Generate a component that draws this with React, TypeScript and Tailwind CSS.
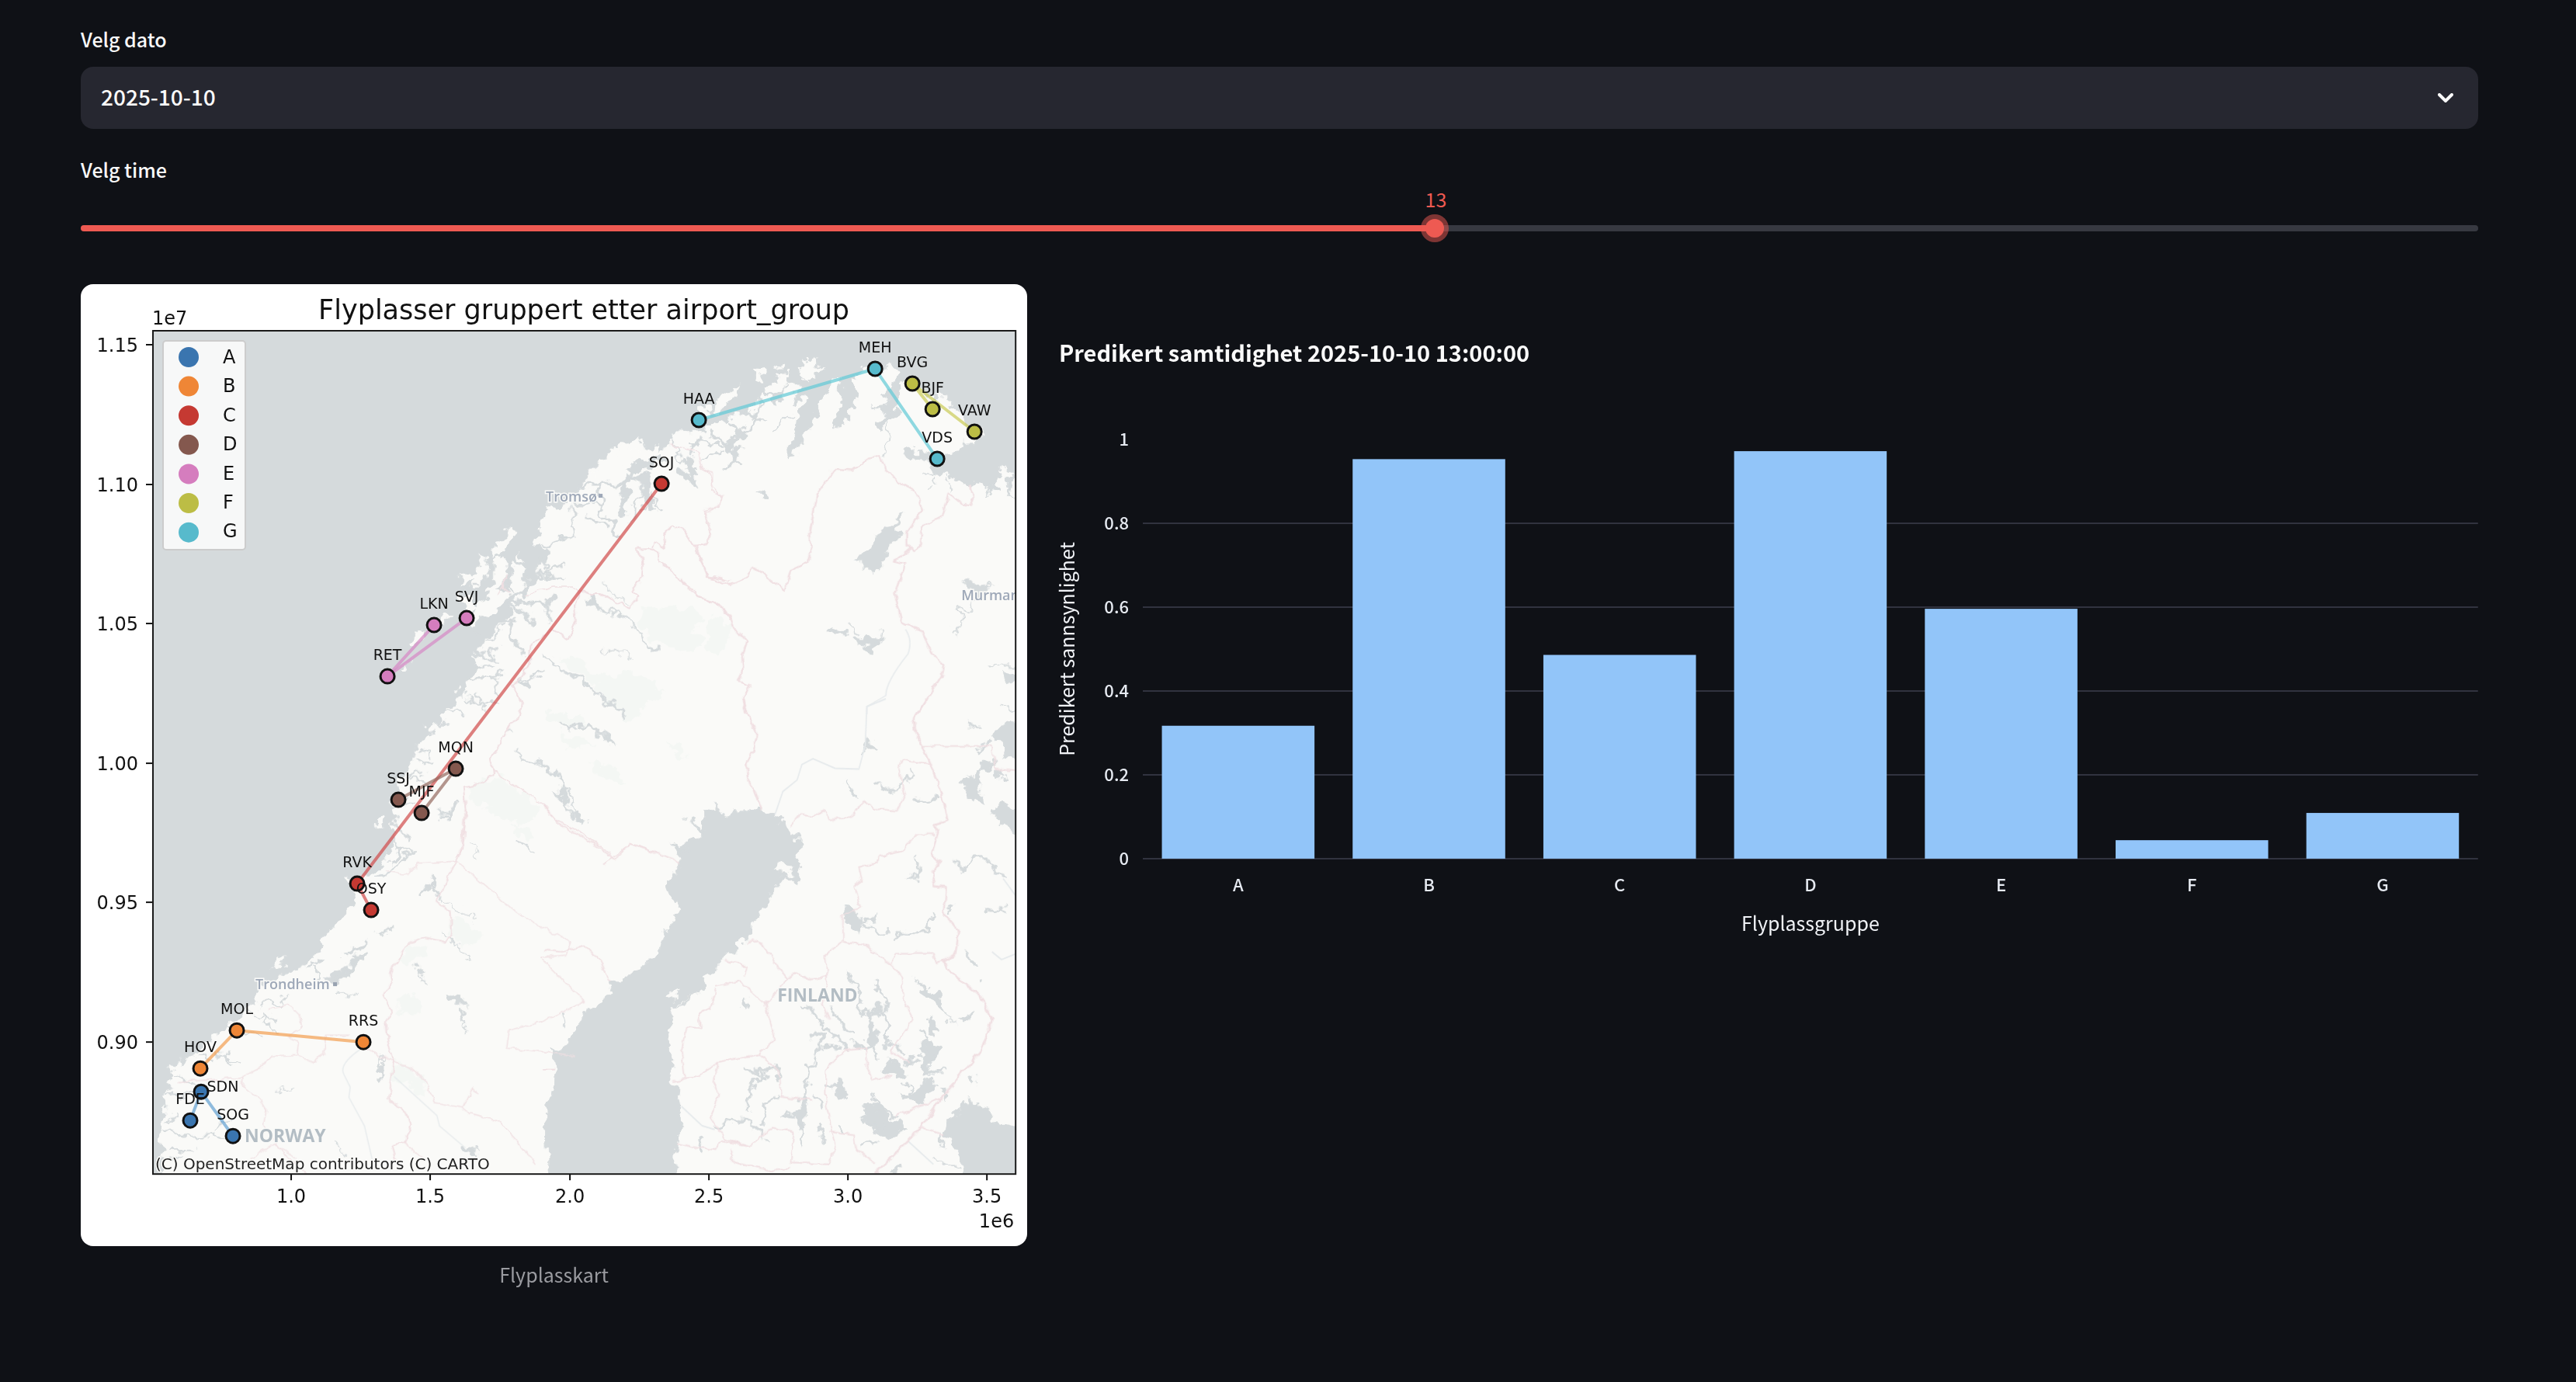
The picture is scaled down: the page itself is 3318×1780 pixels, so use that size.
import { useState } from "react";
import type { ReactNode } from "react";

const UI_FONT = "font-['Noto_Sans_CJK_SC','Source_Sans_Pro',sans-serif]";

const SEA = "#d5dadc";

type Airport = { code: string; x: number; y: number; group: string; dx?: number; dy?: number };

const groupColors: Record<string, string> = {
  A: "#3a75af",
  B: "#ef8636",
  C: "#c53932",
  D: "#84584e",
  E: "#d57dbe",
  F: "#bcbd45",
  G: "#57bacc",
};

const linkColors: Record<string, string> = {
  A: "#619fd2",
  B: "#f29d4f",
  C: "#d04a4a",
  D: "#94695f",
  E: "#d688c4",
  F: "#c9cb55",
  G: "#5fc9d6",
};

const airports: Airport[] = [
  { code: "HAA", x: 900, y: 541, group: "G" },
  { code: "MEH", x: 1127, y: 475, group: "G" },
  { code: "VDS", x: 1207, y: 591, group: "G" },
  { code: "BVG", x: 1175, y: 494, group: "F" },
  { code: "BJF", x: 1201, y: 527, group: "F" },
  { code: "VAW", x: 1255, y: 556, group: "F" },
  { code: "SOJ", x: 852, y: 623, group: "C" },
  { code: "LKN", x: 559, y: 805, group: "E" },
  { code: "SVJ", x: 601, y: 796, group: "E" },
  { code: "RET", x: 499, y: 871, group: "E" },
  { code: "MQN", x: 587, y: 990, group: "D" },
  { code: "SSJ", x: 513, y: 1030, group: "D" },
  { code: "MJF", x: 543, y: 1047, group: "D" },
  { code: "RVK", x: 460, y: 1138, group: "C" },
  { code: "OSY", x: 478, y: 1172, group: "C" },
  { code: "MOL", x: 305, y: 1327, group: "B" },
  { code: "RRS", x: 468, y: 1342, group: "B" },
  { code: "HOV", x: 258, y: 1376, group: "B" },
  { code: "SDN", x: 259, y: 1406, group: "A", dx: 28, dy: 0 },
  { code: "FDE", x: 245, y: 1443, group: "A" },
  { code: "SOG", x: 300, y: 1463, group: "A" },
];

const links: [string, string][] = [
  ["HAA", "MEH"],
  ["MEH", "VDS"],
  ["BVG", "BJF"],
  ["BVG", "VAW"],
  ["SOJ", "RVK"],
  ["RVK", "OSY"],
  ["LKN", "RET"],
  ["SVJ", "RET"],
  ["MQN", "SSJ"],
  ["MQN", "MJF"],
  ["MOL", "RRS"],
  ["MOL", "HOV"],
  ["SDN", "FDE"],
  ["SDN", "SOG"],
];

const latTicks = [
  ["1.15", 444],
  ["1.10", 624],
  ["1.05", 803],
  ["1.00", 983],
  ["0.95", 1162],
  ["0.90", 1342],
] as const;

const lonTicks = [
  ["1.0", 375],
  ["1.5", 554],
  ["2.0", 734],
  ["2.5", 913],
  ["3.0", 1092],
  ["3.5", 1271],
] as const;

/* Each sheet of the base map has its own drawing units. */
const NORTH = "translate(790 426) scale(.3333)";
const MID = "translate(460 600) scale(.3333)";
const SOUTH = "translate(196 1000) scale(.3333)";
const EAST = "translate(700 360) scale(.40816 .35714)";
const GULF = "translate(700 900) scale(.40816 .49745)";

function Waters({ d, w }: { d: string; w: number }) {
  return <path d={d} fill="none" stroke={SEA} strokeWidth={w} strokeLinecap="round" strokeLinejoin="round" />;
}

function Land({ d }: { d: string }) {
  return <path d={d} fill="#fafaf8" />;
}

function Sheet({ at, children }: { at: string; children: ReactNode }) {
  return <g transform={at}>{children}</g>;
}

function BaseMap() {
  return (
    <g clipPath="url(#mapFrame)">
      <rect x="196" y="426" width="1112" height="1086" fill="#fafaf8" />

      {/* nature reserves */}
      <g fill="#f4f7f4" filter="url(#rough)">
        <Sheet at={MID}>
          <path d="M1100 545L1200 540 1310 560 1330 600 1300 640 1330 690 1300 720 1230 700 1160 690 1110 640 1080 590Z" />
          <path d="M1350 600L1400 580 1440 620 1430 700 1390 730 1350 690Z" />
          <path d="M780 740L850 740 900 790 960 810 1080 800 1160 850 1190 880 1110 930 1060 990 990 940 930 860 850 800Z" />
          <path d="M720 950L800 960 870 960 880 1000 800 1010 740 985Z" />
          <path d="M900 1140L960 1140 1010 1190 1030 1225 960 1220 910 1180Z" />
          <path d="M780 1030L880 1050 910 1080 840 1100 780 1060Z" />
          <path d="M1200 1070L1250 1080 1280 1130 1240 1125Z" />
          <path d="M430 1240L530 1200 620 1250 700 1320 680 1370 620 1390 540 1340 440 1300Z" />
          <path d="M600 1390L660 1400 690 1440 650 1450Z" />
        </Sheet>
        <Sheet at={SOUTH}>
          <path d="M1160 540L1230 570 1260 600 1260 640 1200 660 1160 610Z" />
          <path d="M960 680L1000 650 1060 660 1030 700 980 725Z" />
          <path d="M945 860L1010 840 1050 880 1030 915 960 920Z" />
          <path d="M935 1110L1010 1130 1060 1190 1050 1230 980 1190 935 1160Z" />
        </Sheet>
      </g>

      {/* open sea, gulf and the large lakes */}
      <g filter="url(#rough)">
        <g fill={SEA}>
          <Sheet at={NORTH}>
            <path d="M1640 -90L1640 600 1530 545 1505 528 1515 565 1480 575 1482 618 1450 608 1400 590 1340 580 1290 560 1250 552 1225 522 1190 502 1150 495 1110 475 1112 455 1180 475 1225 468 1270 490 1305 486 1320 455 1345 432 1400 428 1425 400 1395 375 1370 350 1340 335 1320 310 1300 268 1270 262 1250 282 1230 250 1180 230 1150 190 1125 190 1105 240 1100 300 1092 340 1062 348 1040 385 1022 352 1052 320 1000 296 1050 286 1060 262 1032 250 1050 232 1078 240 1098 165 1058 130 1045 152 1010 128 985 145 935 155 955 182 935 200 938 260 915 320 915 345 888 350 860 388 862 320 885 280 875 230 885 190 870 176 840 200 830 230 800 290 770 350 735 400 730 440 700 485 672 490 675 440 700 410 705 360 710 310 755 262 738 250 690 285 712 245 722 215 690 190 680 212 655 230 642 292 618 280 588 240 560 270 540 295 500 300 470 325 430 330 400 370 330 385 290 388 245 385 230 430 180 475 120 440 95 410 60 440 20 430 0 470 -1900 470 -1900 -90Z" />
          </Sheet>
          <Sheet at={MID}>
            <path d="M990 -90L930 0 880 50 850 90 830 130 790 155 740 160 730 200 700 208 702 260 685 312 742 320 722 370 690 400 690 440 650 480 600 520 600 570 560 610 500 660 470 720 438 750 480 780 430 820 418 880 350 950 325 985 280 1005 290 1040 230 1080 220 1130 180 1190 150 1230 180 1270 135 1310 150 1360 130 1420 110 1480 60 1540 -910 1540 -910 -90Z" />
          </Sheet>
          <Sheet at={SOUTH}>
            <path d="M940 200L905 320 860 370 800 390 750 388 770 420 790 480 730 540 690 590 650 640 655 675 600 720 560 745 490 770 440 800 400 830 400 880 350 920 290 960 260 1000 200 1040 170 1080 90 1120 60 1170 80 1200 38 1220 52 1300 30 1380 40 1480 20 1600 -120 1600 -120 200Z" />
          </Sheet>
          <Sheet at={GULF}>
            <path d="M512 290L545 280 570 312 610 290 690 290 730 300 770 330 805 355 800 410 815 450 805 480 780 462 735 482 710 520 690 550 660 590 630 625 610 630 610 650 570 670 545 695 520 712 500 755 460 772 420 790 400 830 390 860 395 900 412 940 405 985 425 1010 432 1060 425 1130 415 1180 415 1280 25 1280 10 1180 5 1100 15 1040 35 1000 40 950 20 900 60 905 100 860 140 800 200 770 215 730 250 730 270 710 340 680 365 650 380 600 440 550 400 510 390 480 410 460 440 420 412 380 480 362 512 330Z" />
            <path d="M1265 1120L1290 1080 1340 1035 1400 1060 1430 1095 1550 1145 1550 1280 1330 1280 1310 1180Z" />
            <path d="M1410 90L1450 65 1550 55 1550 162 1450 152 1440 112Z" />
            <path d="M1325 240L1335 200 1360 200 1390 165 1440 160 1385 185 1375 220 1390 275 1350 260Z" />
            <path d="M1408 290L1440 275 1550 285 1550 360 1450 325Z" />
            <path d="M1420 185L1455 180 1460 208 1425 200Z" />
            <path d="M950 535L985 545 1002 575 992 608 955 580Z" />
            <path d="M625 785L638 770 650 790 638 806Z" />
            <path d="M1170 712L1200 740 1255 765 1260 800 1300 840 1240 800 1205 770Z" />
            <path d="M1310 830L1345 805 1340 835Z" />
            <path d="M1210 830L1225 820 1245 850 1230 870 1205 850Z" />
            <path d="M1195 905L1225 880 1250 905 1215 945 1225 975 1200 970Z" />
            <path d="M1060 960L1110 935 1150 960 1130 985Z" />
            <path d="M1120 1025L1160 1025 1215 980 1240 1005 1180 1055Z" />
            <path d="M1250 1015L1275 1010 1270 1035Z" />
            <path d="M1010 1050L1040 1045 1080 1075 1150 1112 1080 1140 1050 1120 1015 1095Z" />
            <path d="M915 1010L935 985 955 1020 940 1040Z" />
            <path d="M795 1080L820 1050 828 1110 808 1120Z" />
            <path d="M490 1145L500 1140 515 1165 505 1175Z" />
            <path d="M1340 980L1355 972 1362 995 1350 1008Z" />
            <path d="M1085 1225L1130 1205 1130 1228Z" />
          </Sheet>
          <Sheet at={EAST}>
            <path d="M975 1010L1010 980 1050 930 1070 890 1145 850 1110 895 1122 920 1090 960 1080 1000 1060 1040 1030 1070 1020 1050 1000 1020Z" />
            <path d="M885 1265L900 1240 930 1250 965 1297 930 1285Z" />
            <path d="M980 1300L1010 1285 1050 1288 1072 1292 1040 1342 1010 1330Z" />
            <path d="M1320 1080L1350 1090 1370 1100 1430 1100 1388 1120 1370 1160 1355 1120Z" />
            <path d="M140 1152L190 1180 170 1190 148 1175Z" />
            <path d="M683 765L700 768 702 785 690 795Z" />
            <path d="M1445 1420L1490 1420 1490 1460 1460 1450Z" />
          </Sheet>
          <Sheet at={SOUTH}>
            <path d="M1135 830L1180 840 1230 885 1195 880 1160 870Z" />
            <path d="M1010 735L1030 725 1040 760 1015 755Z" />
            <path d="M670 770L750 730 790 690 830 700 790 720 760 760 765 790 700 795Z" />
            <path d="M770 670L820 640 835 645 800 670Z" />
          </Sheet>
        </g>

        {/* islands */}
        <Sheet at={NORTH}>
          <Land d="M715 150L740 135 745 100 770 125 800 108 790 140 822 150 770 170 755 205 722 180Z" />
          <Land d="M585 222L640 200 630 175 662 168 670 155 690 190 650 230 610 245Z" />
          <Land d="M545 155L575 150 578 180 555 178Z" />
          <Land d="M632 130L648 118 652 135 638 148Z" />
          <Land d="M380 290L400 260 450 240 480 205 490 250 440 285 400 315Z" />
          <Land d="M320 300L365 285 390 325 340 325Z" />
          <Land d="M450 350L490 320 520 300 560 280 590 300 540 330 500 370Z" />
          <Land d="M130 460L165 435 178 470 150 500 125 490Z" />
          <Land d="M20 460L50 430 90 470 50 520 20 500Z" />
          <Land d="M300 395L350 380 350 410 310 412Z" />
          <Land d="M1250 250L1290 265 1300 300 1260 290Z" />
        </Sheet>
        <Sheet at={MID}>
          <Land d="M600 232L605 260 575 320 545 345 520 365 530 300 565 265Z" />
          <Land d="M545 355L575 350 580 420 550 470 530 500 500 490 525 440 525 390Z" />
          <Land d="M475 335L500 370 505 420 470 470 440 470 450 440 395 462 400 405 440 425 470 400Z" />
          <Land d="M600 385L640 380 655 430 640 500 590 500 600 440Z" />
          <Land d="M615 340L655 350 650 372 625 370Z" />
          <Land d="M430 590L470 530 520 500 580 470 590 500 530 560 480 580 440 620Z" />
          <Land d="M385 490L450 520 470 545 430 560Z" />
          <Land d="M300 595L340 560 375 575 340 605Z" />
          <Land d="M208 700L220 655 265 620 260 650 225 700Z" />
          <Land d="M690 400L720 390 720 440 690 440Z" />
          <Land d="M375 860L390 845 392 858 380 865Z" />
          <Land d="M80 1375L100 1365 102 1385 85 1392Z" />
          <Land d="M160 780L200 755 180 780Z" />
          <Land d="M880 60L920 30 940 60 900 90Z" />
        </Sheet>
        <Sheet at={SOUTH}>
          <Land d="M455 730L515 700 518 722 470 740Z" />
          <Land d="M868 175L890 165 892 188 875 195Z" />
          <Land d="M65 1130L90 1120 100 1160 80 1165Z" />
        </Sheet>
        <Sheet at={GULF}>
          <Land d="M728 445L745 430 790 435 775 455 740 456Z" />
          <Land d="M390 770L420 752 418 775 400 780Z" />
        </Sheet>
      </g>

      {/* fjords, rivers and narrow lakes */}
      <g filter="url(#rough)">
        <Sheet at={NORTH}>
          <Waters w={14} d="M400 350L440 330 520 300M445 350L500 400 460 430M380 400L440 430 460 470 450 525M460 470L490 460M455 500L490 515M520 300L560 345 500 400" />
          <Waters w={22} d="M455 420L462 460M1075 240L1088 330M60 530L110 520 200 500M290 490L315 590M50 580L110 560 130 640" />
          <Waters w={9} d="M300 430L440 440M340 495L440 470M560 345L595 345M580 240L560 300 540 340M610 390L640 350 680 320M0 600L60 580 40 700M60 580L80 530M110 700L150 620 180 690M230 440L260 500 320 530M340 410L300 470M0 740L10 780" />
          <Waters w={6} d="M1065 350L1055 440 1045 490M1240 560L1250 600M1200 560L1240 540M1230 600L1215 625M1285 570L1300 610M1440 640L1455 600M1530 620L1560 660" />
          <Waters w={18} d="M1540 560L1530 620M40 640L30 700M570 625L585 640" />
        </Sheet>
        <Sheet at={MID}>
          <Waters w={13} d="M840 150L900 150 940 140 950 190 985 215 990 250M860 70L950 70 1010 70 1045 50M940 80L945 140M880 190L920 220 960 240" />
          <Waters w={24} d="M1040 60L1035 100M1110 30L1110 80 1140 160M1250 20L1310 70" />
          <Waters w={10} d="M1035 100L1020 190M1110 80L1060 230M725 310L780 280 830 280M830 280L830 170M690 420L730 420 780 370 800 375M730 400L720 360M740 420L790 440" />
          <Waters w={14} d="M600 540L640 520 710 540 770 500M730 530L745 600M655 480L600 500 600 540M560 610L600 600 600 660 640 720M610 550L660 580 670 610" />
          <Waters w={9} d="M470 720L510 740 550 760M500 740L540 700M460 650L520 670 560 620M430 820L500 820 570 800M520 820L545 890M440 790L520 770M420 900L470 910 550 920M470 910L460 880M480 910L490 940M350 950L410 960M300 1000L350 990M240 1100L290 1130M230 1140L300 1150M190 1200L260 1190M200 1210L280 1230M170 1300L220 1290M150 1360L170 1420 200 1450M560 480L590 440 600 400M150 1480L210 1480" />
          <Waters w={22} d="M650 490L650 440M905 525L935 545M640 830L660 860M800 1260L805 1300M845 1350L870 1370" />
          <Waters w={9} d="M900 520L930 545 1010 570 1070 600M1070 600L1095 655 1130 700 1160 715M720 730L760 770 830 800 890 852 930 870 960 905 1000 935 1040 965M795 1005L840 1015 890 1005 950 1035 1000 1080M700 1145L760 1190 810 1250 800 1310 835 1360M620 1100L640 1135 700 1145M640 830L690 805 720 800M745 1255L790 1260M320 1340L350 1330 395 1305M340 1370L355 1330M620 1450L680 1490" />
          <Waters w={5} d="M950 465L1000 495 1055 540M955 715L1010 715 1058 740M950 1020L990 1065M590 1015L600 1030" />
          <Waters w={10} d="M1280 1365L1340 1410M1220 1465L1260 1490M1380 1310L1400 1340" />
        </Sheet>
        <Sheet at={SOUTH}>
          <Waters w={10} d="M935 180L930 250 960 290 920 330M930 120L950 100M860 390L920 370 960 330 1010 280M920 340L960 300M630 740L650 790M600 740L655 710M740 690L790 660 830 640M700 790L760 750 830 690M780 690L825 690M865 608L935 578" />
          <Waters w={8} d="M415 870L490 880M430 910L440 960 485 995M380 920L430 920 490 950M350 990L430 1000M330 1000L290 960M230 1060L290 1080 330 1110M290 1060L300 1120M180 1090L240 1090M80 1160L190 1195M45 1225L150 1230M60 1330L90 1320M45 1370L110 1395 240 1385 300 1395M240 1370L260 1340 330 1330M70 1440L160 1440M40 1480L110 1470M520 850L490 880" />
          <Waters w={12} d="M1120 150L1145 145 1185 108M1140 150L1140 170M1080 390L1075 420 1045 455M1080 410L1105 450M1190 900L1190 940M880 1120L880 1180" />
          <Waters w={5} d="M1100 460L1160 510 1260 550M1115 600L1180 650 1215 698M1015 750L1060 800M1195 930L1215 990M885 1070L885 1120M720 838L785 845M480 1210L550 1210M1230 270L1260 310M710 1410L745 1480M1200 1430L1260 1450" />
          <Waters w={16} d="M1210 1435L1240 1455" />
        </Sheet>
        <Sheet at={GULF}>
          <Waters w={8} d="M455 312L505 345M410 378L450 390M1000 150L1020 110 1060 130M950 215L985 250M1060 225L1100 240 1130 230 1160 195M1180 262L1240 265M1005 575L1050 570M1005 585L1080 605M1100 625L1110 605 1180 610 1225 590M1220 565L1215 600M1150 465L1180 460 1180 415M1300 420L1330 445 1345 412 1400 415 1450 465M1395 545L1460 550M1340 655L1365 695M1375 725L1385 732M1280 530L1285 560M1335 68L1380 70M1370 135L1410 110M420 800L470 770" />
          <Waters w={9} d="M820 790L860 810 880 850 930 880 960 910M840 880L880 870 860 920M910 800L940 840 980 870M960 710L990 740 1000 800 1030 830 1040 880 1050 930M1060 800L1080 830 1080 900M1050 740L1090 790 1070 810M1010 820L1050 800 1060 820M880 900L930 900M860 930L840 960 820 1050M980 890L1040 900M1090 890L1140 920M1150 945L1180 930M1200 870L1215 930M1190 860L1195 870" />
          <Waters w={9} d="M640 965L700 970 740 960M735 945L740 985M690 970L650 1010 645 1060M740 1030L700 1060 690 1100M540 1115L600 1085 650 1100 700 1135M860 1040L880 1050M900 1000L920 1020M930 1100L945 1130M870 1110L885 1150M820 1110L820 1150M1000 1155L1050 1150M1040 1030L1060 1060 1120 1080M1000 1090L1030 1080M1150 1000L1160 1040M1215 960L1260 965M760 1075L800 1080M1255 1130L1260 1160" />
          <Waters w={22} d="M1035 850L1045 890M820 1040L815 1090M1030 1070L1070 1105M1200 900L1215 960M1090 950L1140 965" />
          <Waters w={5} d="M60 72L140 72 225 118M195 0L262 42M0 175L60 215 70 270M80 230L100 300 130 318M25 240L70 245M1235 1190L1300 1215M60 820L80 850" />
          <Waters w={16} d="M60 240L68 262M105 305L120 315" />
        </Sheet>
        <Sheet at={EAST}>
          <Waters w={6} d="M1365 1160L1340 1190 1310 1200 1325 1235 1295 1270M970 1255L1000 1280M1060 1270L1050 1310M1415 1390L1480 1390M1450 1540L1490 1545" />
        </Sheet>
      </g>

      {/* rivers drawn as thin blue-grey threads */}
      <g fill="none" stroke="#e6eaec" strokeWidth="4" strokeLinejoin="round">
        <Sheet at={EAST}>
          <path d="M1142 1262Q1165 1300 1150 1350Q1080 1450 1080 1500L1020 1540 1020 1568" />
        </Sheet>
        <Sheet at={GULF}>
          <path d="M1080 0L1020 20 1015 120 995 182 920 180 850 155 815 170 800 210 755 240 730 300" />
          <path d="M1450 465L1490 510M1415 655L1445 675 1490 660M435 1055L500 1105 540 1115M1150 1145L1230 1205" />
        </Sheet>
        <Sheet at={SOUTH}>
          <path d="M810 1050Q720 1110 740 1150L765 1200 760 1240 820 1350 850 1480M935 1160L1100 1310 1110 1350 1210 1435" />
        </Sheet>
      </g>

      {/* borders */}
      <g fill="none" stroke="#f0dfe2" strokeWidth="6" strokeLinejoin="round" filter="url(#wobble)">
        <Sheet at={MID}>
          <path d="M1075 320L1135 318 1165 335 1170 370 1215 405 1240 440 1300 480 1310 505 1380 525 1420 560 1440 600" />
          <path d="M1140 315L1150 295 1190 322 1185 265 1220 232 1260 245 1300 310 1345 400 1350 430 1385 430 1440 445" />
          <path d="M1075 320L1105 365 1100 430 1060 480 1090 505 1055 548 940 495 900 495 860 480 840 540 845 600 815 670 755 630 670 695 665 760 630 820 600 850 635 915 630 965 590 1000 550 1080 512 1130 525 1190 470 1230 410 1240 420 1340 408 1480 380 1510" />
          <path strokeWidth="4" d="M650 505L700 480 760 468 830 468 860 480M525 1180L650 1260 720 1310 770 1370 870 1420 980 1500M1300 310L1350 305 1365 260 1340 180 1390 160 1408 120 1375 80 1355 20 1330 0M540 500L580 420 560 470 590 490M950 1540L1060 1460 1150 1490" />
        </Sheet>
        <Sheet at={SOUTH}>
          <path d="M1208 130L1195 270 1175 330 1095 485 1150 515 1155 600 1135 640 1045 620 985 650 918 760 925 790 895 845 925 910 905 950 910 1020 933 1100 915 1245 990 1310 1000 1350 975 1415 925 1425 940 1480" />
          <path strokeWidth="4" d="M900 365L990 380 1030 335 1175 328 1260 400M450 900L530 880 570 920 580 965 530 1000 565 1030 560 1075 460 1080 420 1125 350 1160 350 1200 410 1240 440 1290 430 1350 500 1450 600 1540M560 1075L620 1105 665 1070 670 1000 760 1000M100 1180L350 1165M935 1105L1000 1125 1060 1180 1090 1260 1200 1280 1240 1200 1260 1230M830 1050L880 1080 933 1100M380 1480L470 1420 560 1480M975 1415L1050 1480" />
          <path strokeWidth="4" d="M1260 400L1400 520 1500 580 1620 640 1600 690 1500 700 1620 820 1670 870 1500 950 1380 980 1370 1050 1480 1060 1640 1080M1200 1280L1220 1300 1340 1330 1420 1420 1480 1500" />
        </Sheet>
        <Sheet at={EAST}>
          <path d="M480 960L515 1070 590 1100 640 1075 660 1035 760 1120 780 1050 835 1020 845 980 840 915 860 780 915 685 975 690 1030 645 1060 635 1080 680 1110 725 1175 765 1195 835 1145 915 1145 960 1170 980 1190 950 1195 890 1260 850 1280 770 1320 810 1345 815 1355 790 1345 740" />
          <path d="M1155 970L1105 1015 1142 1025 1108 1130 1130 1235 1195 1268 1225 1350 1262 1390 1255 1430 1180 1568" />
          <path d="M430 1080L480 1140 550 1170 590 1220 600 1255 640 1305 625 1350 630 1400 615 1450 650 1460 630 1510 640 1568" />
          <path strokeWidth="4" d="M400 595L450 610 490 620 500 680 530 700 530 760 565 780 545 820 505 830 530 910 520 950 480 962" />
        </Sheet>
        <Sheet at={GULF}>
          <path d="M1210 0L1168 50 1170 80 1220 170 1255 240 1275 315 1235 325 1245 345 1225 400 1250 420 1225 450 1235 485 1270 490 1265 560 1310 600 1300 660 1260 680 1300 720 1380 770 1415 830 1380 910 1250 1040 1190 1110 1130 1160 1050 1228" />
          <path d="M630 0L640 30 672 90 660 135 640 170 645 210 665 235 690 290" />
          <path strokeWidth="4" d="M780 330L810 300 850 305 885 290 900 310 970 308 1010 265 1045 285 1115 290 1140 250 1120 180 1135 160 1220 168M1195 122H1415L1425 180 1490 185M1235 350L1180 350 1130 395 1065 405 1050 425 995 435 1005 470 980 485 1000 540 945 560 945 625 890 665 895 720 850 730 790 710 770 725 690 640 660 620 640 635M945 628L1020 640 1095 690 1110 658 1225 658 1240 685 1260 680" />
          <path strokeWidth="4" d="M0 275L50 325 150 370 225 415 275 375 410 415 430 430M0 650L60 655 130 640 180 680 210 730M770 725L700 790M545 745L620 730 700 790 730 880 680 920 550 940 490 975 410 990M545 750L530 800 490 815 495 855 450 850 435 910 445 980M550 940L535 990 555 1020 525 1080 570 1140 650 1160M420 1150L470 1160 540 1170 560 1145 650 1160 720 1110 790 1120 780 1200 900 1205 920 1160 890 1040 890 960" />
          <path strokeWidth="4" d="M570 675L640 690 630 720M895 720L880 790 900 830M680 920L740 960 750 1030 850 1040M890 960L950 910 1020 905 1020 950 1040 990 1100 975M1100 690L1130 720 1135 780 1165 830 1130 870 1095 910 1150 940M590 1165L600 1200 700 1220 780 1215M900 1120L980 1130 985 1165 1050 1205M1195 1110L1260 1130M1110 1080L1250 1035M0 960H32" />
        </Sheet>
      </g>

      {/* place names */}
      <g className="font-['Open_Sans',sans-serif] font-semibold" stroke="#fafaf8" strokeWidth="3" paintOrder="stroke">
        <text x="703" y="646" fontSize="18" fill="#9ea8b8">Tromsø</text>
        <text x="1238" y="773" fontSize="18" fill="#9ea8b8">Murman</text>
        <text x="329" y="1274" fontSize="18" fill="#9ea8b8">Trondheim</text>
        <g fontSize="23" fill="#b3bdc4" className="font-['Open_Sans',sans-serif] font-bold">
          <text x="315" y="1471">NORWAY</text>
          <text x="1001" y="1290">FINLAND</text>
        </g>
      </g>
      <rect x="771" y="636" width="5" height="5" fill="#9ea8b8" />
      <rect x="429" y="1265" width="5" height="5" fill="#98a2b0" />
    </g>
  );
}

function AirportMap() {
  const byCode = Object.fromEntries(airports.map((a) => [a.code, a]));
  return (
    <svg
      viewBox="104 366 1219 1239"
      role="img"
      aria-label="Flyplasser gruppert etter airport_group"
      className="block w-full rounded-2xl bg-white font-['DejaVu_Sans',sans-serif]"
    >
      <defs>
        <clipPath id="mapFrame">
          <rect x="196" y="426" width="1112" height="1086" />
        </clipPath>
        <filter id="rough" filterUnits="userSpaceOnUse" x="150" y="400" width="1200" height="1150">
          <feTurbulence type="fractalNoise" baseFrequency=".07" numOctaves="3" seed="4" />
          <feDisplacementMap in="SourceGraphic" scale="22" xChannelSelector="R" yChannelSelector="G" />
        </filter>
        <filter id="wobble" filterUnits="userSpaceOnUse" x="150" y="400" width="1200" height="1150">
          <feTurbulence type="fractalNoise" baseFrequency=".09" numOctaves="2" seed="9" />
          <feDisplacementMap in="SourceGraphic" scale="8" xChannelSelector="R" yChannelSelector="G" />
        </filter>
      </defs>

      <BaseMap />

      {links.map(([from, to]) => (
        <line
          key={from + to}
          x1={byCode[from].x}
          y1={byCode[from].y}
          x2={byCode[to].x}
          y2={byCode[to].y}
          stroke={linkColors[byCode[from].group]}
          strokeWidth="4"
          strokeOpacity=".7"
        />
      ))}
      {airports.map((a) => (
        <circle key={a.code} cx={a.x} cy={a.y} r="9" fill={groupColors[a.group]} stroke="#111" strokeWidth="3" />
      ))}
      <g fontSize="19" textAnchor="middle" fill="#111">
        {airports.map((a) => (
          <text key={a.code} x={a.x + (a.dx ?? 0)} y={a.y + (a.dy ?? -21)}>
            {a.code}
          </text>
        ))}
      </g>

      <text x="200" y="1506" fontSize="20" fill="#222" stroke="#fafaf8" strokeWidth="3" paintOrder="stroke">
        (C) OpenStreetMap contributors (C) CARTO
      </text>

      <rect x="197" y="426" width="1111" height="1086" fill="none" stroke="#1a1a1a" strokeWidth="2" />

      <text x="752" y="411" fontSize="35" textAnchor="middle" fill="#111">
        Flyplasser gruppert etter airport_group
      </text>
      <g fontSize="24" fill="#111">
        <text x="196" y="418">1e7</text>
        <text x="1306" y="1581" textAnchor="end">1e6</text>
        {latTicks.map(([label, y]) => (
          <g key={label}>
            <line x1="188" x2="196" y1={y} y2={y} stroke="#111" strokeWidth="2" />
            <text x="178" y={y + 9} textAnchor="end">{label}</text>
          </g>
        ))}
        {lonTicks.map(([label, x]) => (
          <g key={label}>
            <line x1={x} x2={x} y1="1512" y2="1520" stroke="#111" strokeWidth="2" />
            <text x={x} y="1549" textAnchor="middle">{label}</text>
          </g>
        ))}
        <rect x="210" y="439" width="106" height="269" rx="4" fill="#fff" fillOpacity=".8" stroke="#ccc" strokeWidth="2" />
        {Object.entries(groupColors).map(([name, color], i) => (
          <g key={name}>
            <circle cx="243" cy={460 + i * 37.6} r="13" fill={color} />
            <text x="287" y={468 + i * 37.4}>{name}</text>
          </g>
        ))}
      </g>
    </svg>
  );
}

const predictions = [
  { group: "A", value: 0.317 },
  { group: "B", value: 0.953 },
  { group: "C", value: 0.486 },
  { group: "D", value: 0.972 },
  { group: "E", value: 0.596 },
  { group: "F", value: 0.044 },
  { group: "G", value: 0.109 },
];

function PredictionChart({ date, hour }: { date: string; hour: number }) {
  const left = 117;
  const right = 1837;
  const base = 740;
  const unit = 540;
  const pitch = (right - left) / predictions.length;
  return (
    <svg viewBox="0 0 1837 900" role="img" aria-label="Predikert samtidighet" className="block w-full">
      <text x="9" y="100" fontSize="29" fontWeight="700" fill="#fafafa">
        {`Predikert samtidighet ${date} ${String(hour).padStart(2, "0")}:00:00`}
      </text>
      <g fontSize="22" fill="#e6eaf1">
        {[0, 0.2, 0.4, 0.6, 0.8, 1].map((t) => (
          <g key={t}>
            {t < 1 && (
              <line x1={left} x2={right} y1={base - t * unit} y2={base - t * unit} stroke="#31333f" strokeWidth="2" />
            )}
            <text x="99" y={base + 8 - t * unit} textAnchor="end">{t}</text>
          </g>
        ))}
        {predictions.map((p, i) => (
          <g key={p.group}>
            <rect
              x={left + pitch * (i + 0.1)}
              y={base - p.value * unit}
              width={pitch * 0.8}
              height={p.value * unit}
              fill="#92c5f9"
            />
            <text x={left + pitch * (i + 0.5)} y="782" textAnchor="middle">{p.group}</text>
          </g>
        ))}
      </g>
      <g fontSize="25" fontWeight="400" fill="#f0f2f6" textAnchor="middle">
        <text x="977" y="833">Flyplassgruppe</text>
        <text transform="translate(29 470) rotate(-90)">Predikert sannsynlighet</text>
      </g>
    </svg>
  );
}

export default function App() {
  const [date, setDate] = useState("2025-10-10");
  const [hour, setHour] = useState(13);
  const pct = (hour / 23) * 100;

  return (
    <main className={`min-h-screen bg-[#0f1116] pt-8 pr-[126px] pb-28 pl-[104px] text-[25px] font-medium text-[#fafafa] ${UI_FONT}`}>
      <label htmlFor="date" className="block leading-9">
        Velg dato
      </label>
      <div className="mt-[18px] grid items-center">
        <select
          id="date"
          value={date}
          onChange={(e) => setDate(e.target.value)}
          className="col-start-1 row-start-1 h-20 w-full appearance-none rounded-2xl bg-[#262730] px-[26px] pb-1 text-[28px] leading-10 outline-none"
        >
          <option>2025-10-10</option>
          <option>2025-10-11</option>
          <option>2025-10-12</option>
        </select>
        <svg viewBox="0 0 20 12" aria-hidden="true" className="pointer-events-none col-start-1 row-start-1 mr-8 h-3 w-5 justify-self-end">
          <path d="M2 2L10 10L18 2" fill="none" stroke="#fafafa" strokeWidth="4" strokeLinecap="round" strokeLinejoin="miter" />
        </svg>
      </div>

      <label htmlFor="hour" className="mt-[34px] block leading-9">
        Velg time
      </label>
      <div className="relative mt-0.5 h-9">
        <output
          htmlFor="hour"
          className="absolute -translate-x-1/2 leading-9 font-normal text-[#ee5a52]"
          style={{ left: `${pct}%` }}
        >
          {hour}
        </output>
      </div>
      <input
        id="hour"
        type="range"
        min={0}
        max={23}
        value={hour}
        onChange={(e) => setHour(Number(e.target.value))}
        className="mt-4 block h-2 w-full appearance-none rounded outline-none [&::-webkit-slider-thumb]:size-6 [&::-webkit-slider-thumb]:appearance-none [&::-webkit-slider-thumb]:rounded-full [&::-webkit-slider-thumb]:bg-[#ee5a52] [&::-webkit-slider-thumb]:shadow-[0_0_0_6px_rgba(238,90,82,0.5)]"
        style={{ background: `linear-gradient(to right, #ee5a52 ${pct}%, #373941 ${pct}%)` }}
      />

      <div className="mt-[68px] flex items-start gap-8">
        <figure className="min-w-0 basis-[calc(40%-16px)]">
          <AirportMap />
          <figcaption className="mt-4 text-center leading-10 font-normal text-[#9a9ba0]">Flyplasskart</figcaption>
        </figure>
        <section className="min-w-0 basis-[calc(60%-16px)]">
          <PredictionChart date={date} hour={hour} />
        </section>
      </div>
    </main>
  );
}
